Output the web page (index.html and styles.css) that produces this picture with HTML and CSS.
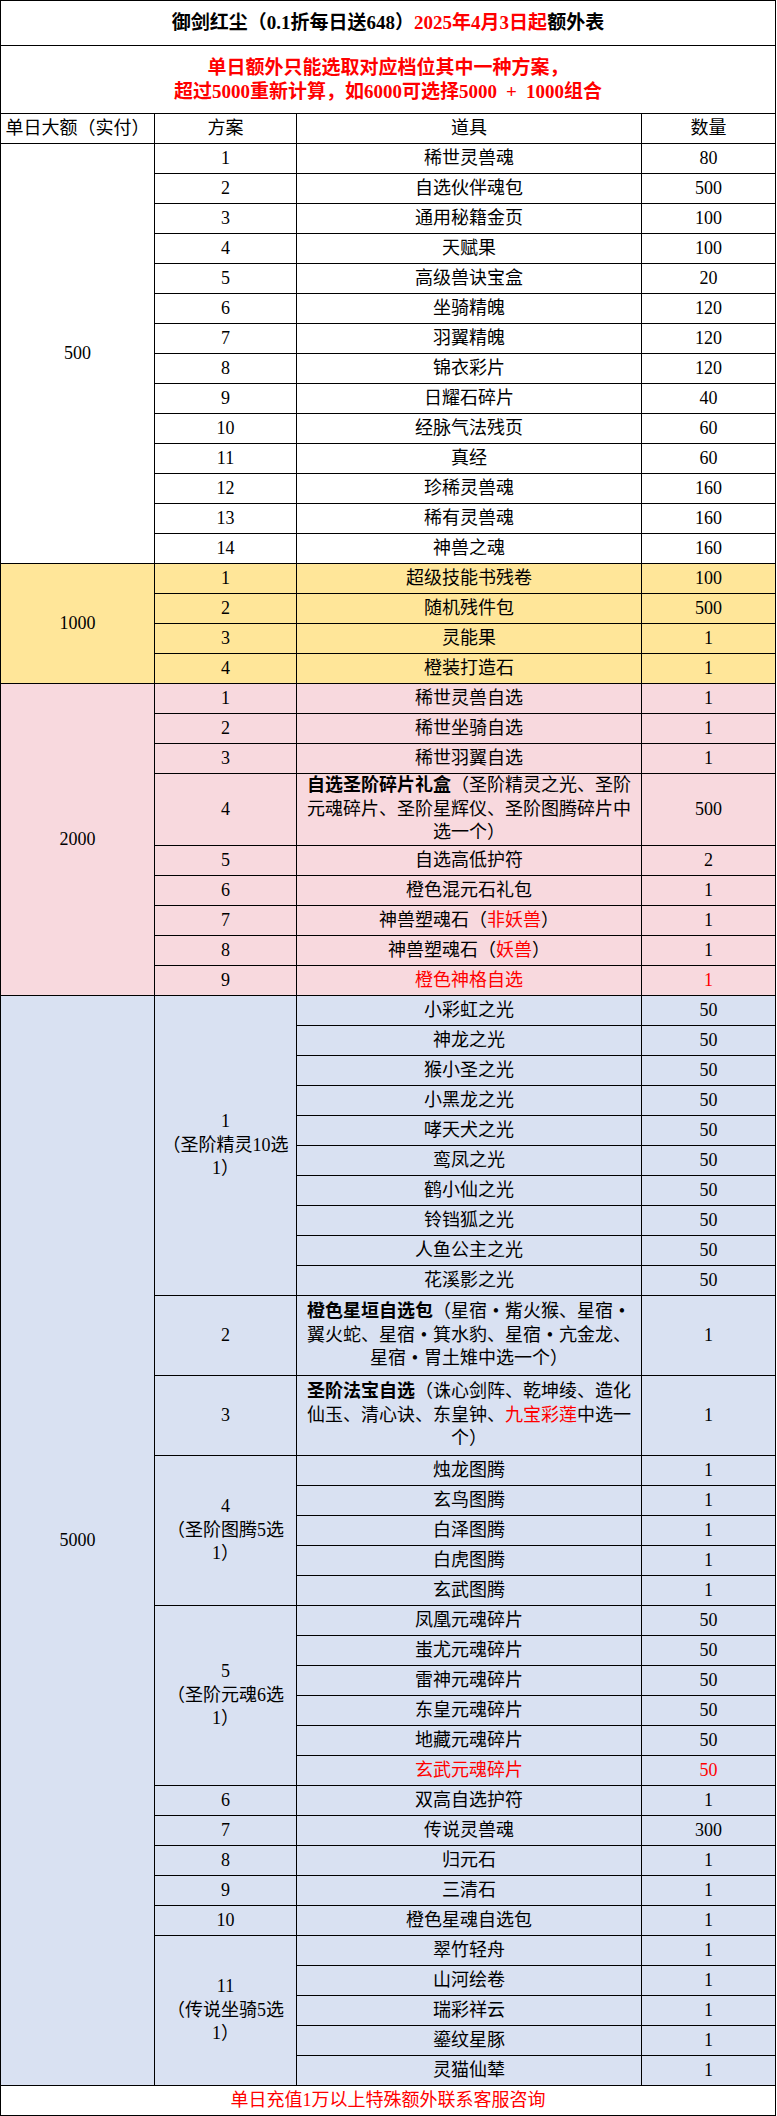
FILE: index.html
```html
<!DOCTYPE html>
<html lang="zh-CN">
<head>
<meta charset="utf-8">
<title>御剑红尘 额外表</title>
<link rel="stylesheet" href="styles.css">
</head>
<body>
<div class="sheet">
  <div class="c wide title"><div>御剑红尘（0.1折每日送648）<span class="red">2025年4月3日起</span>额外表</div></div>
  <div class="c wide notice"><div>单日额外只能选取对应档位其中一种方案，<br>超过5000重新计算，如6000可选择5000<span class="op">+</span>1000组合</div></div>

  <div class="c">单日大额（实付）</div>
  <div class="c">方案</div>
  <div class="c">道具</div>
  <div class="c">数量</div>

  <div class="block">
    <div class="c r14">500</div>
    <div class="c">1</div><div class="c">稀世灵兽魂</div><div class="c">80</div>
    <div class="c">2</div><div class="c">自选伙伴魂包</div><div class="c">500</div>
    <div class="c">3</div><div class="c">通用秘籍金页</div><div class="c">100</div>
    <div class="c">4</div><div class="c">天赋果</div><div class="c">100</div>
    <div class="c">5</div><div class="c">高级兽诀宝盒</div><div class="c">20</div>
    <div class="c">6</div><div class="c">坐骑精魄</div><div class="c">120</div>
    <div class="c">7</div><div class="c">羽翼精魄</div><div class="c">120</div>
    <div class="c">8</div><div class="c">锦衣彩片</div><div class="c">120</div>
    <div class="c">9</div><div class="c">日耀石碎片</div><div class="c">40</div>
    <div class="c">10</div><div class="c">经脉气法残页</div><div class="c">60</div>
    <div class="c">11</div><div class="c">真经</div><div class="c">60</div>
    <div class="c">12</div><div class="c">珍稀灵兽魂</div><div class="c">160</div>
    <div class="c">13</div><div class="c">稀有灵兽魂</div><div class="c">160</div>
    <div class="c">14</div><div class="c">神兽之魂</div><div class="c">160</div>
  </div>

  <div class="block gold">
    <div class="c r4">1000</div>
    <div class="c">1</div><div class="c">超级技能书残卷</div><div class="c">100</div>
    <div class="c">2</div><div class="c">随机残件包</div><div class="c">500</div>
    <div class="c">3</div><div class="c">灵能果</div><div class="c">1</div>
    <div class="c">4</div><div class="c">橙装打造石</div><div class="c">1</div>
  </div>

  <div class="block rose">
    <div class="c r9">2000</div>
    <div class="c">1</div><div class="c">稀世灵兽自选</div><div class="c">1</div>
    <div class="c">2</div><div class="c">稀世坐骑自选</div><div class="c">1</div>
    <div class="c">3</div><div class="c">稀世羽翼自选</div><div class="c">1</div>
    <div class="c">4</div><div class="c long h71"><div><b>自选圣阶碎片礼盒</b>（圣阶精灵之光、圣阶元魂碎片、圣阶星辉仪、圣阶图腾碎片中选一个）</div></div><div class="c">500</div>
    <div class="c">5</div><div class="c">自选高低护符</div><div class="c">2</div>
    <div class="c">6</div><div class="c">橙色混元石礼包</div><div class="c">1</div>
    <div class="c">7</div><div class="c"><div>神兽塑魂石（<span class="red">非妖兽</span>）</div></div><div class="c">1</div>
    <div class="c">8</div><div class="c"><div>神兽塑魂石（<span class="red">妖兽</span>）</div></div><div class="c">1</div>
    <div class="c">9</div><div class="c red">橙色神格自选</div><div class="c red">1</div>
  </div>

  <div class="block sky">
    <div class="c r33">5000</div>
    <div class="c r10"><div>1<br>（圣阶精灵10选1）</div></div>
    <div class="c">小彩虹之光</div><div class="c">50</div>
    <div class="c">神龙之光</div><div class="c">50</div>
    <div class="c">猴小圣之光</div><div class="c">50</div>
    <div class="c">小黑龙之光</div><div class="c">50</div>
    <div class="c">哮天犬之光</div><div class="c">50</div>
    <div class="c">鸾凤之光</div><div class="c">50</div>
    <div class="c">鹤小仙之光</div><div class="c">50</div>
    <div class="c">铃铛狐之光</div><div class="c">50</div>
    <div class="c">人鱼公主之光</div><div class="c">50</div>
    <div class="c">花溪影之光</div><div class="c">50</div>

    <div class="c">2</div><div class="c long h79"><div><b>橙色星垣自选包</b>（星宿<span class="dot">•</span>觜火猴、星宿<span class="dot">•</span>翼火蛇、星宿<span class="dot">•</span>箕水豹、星宿<span class="dot">•</span>亢金龙、星宿<span class="dot">•</span>胃土雉中选一个）</div></div><div class="c">1</div>
    <div class="c">3</div><div class="c long h79"><div><b>圣阶法宝自选</b>（诛心剑阵、乾坤绫、造化仙玉、清心诀、东皇钟、<span class="red">九宝彩莲</span>中选一个）</div></div><div class="c">1</div>

    <div class="c r5"><div>4<br>（圣阶图腾5选1）</div></div>
    <div class="c">烛龙图腾</div><div class="c">1</div>
    <div class="c">玄鸟图腾</div><div class="c">1</div>
    <div class="c">白泽图腾</div><div class="c">1</div>
    <div class="c">白虎图腾</div><div class="c">1</div>
    <div class="c">玄武图腾</div><div class="c">1</div>

    <div class="c r6"><div>5<br>（圣阶元魂6选1）</div></div>
    <div class="c">凤凰元魂碎片</div><div class="c">50</div>
    <div class="c">蚩尤元魂碎片</div><div class="c">50</div>
    <div class="c">雷神元魂碎片</div><div class="c">50</div>
    <div class="c">东皇元魂碎片</div><div class="c">50</div>
    <div class="c">地藏元魂碎片</div><div class="c">50</div>
    <div class="c red">玄武元魂碎片</div><div class="c red">50</div>

    <div class="c">6</div><div class="c">双高自选护符</div><div class="c">1</div>
    <div class="c">7</div><div class="c">传说灵兽魂</div><div class="c">300</div>
    <div class="c">8</div><div class="c">归元石</div><div class="c">1</div>
    <div class="c">9</div><div class="c">三清石</div><div class="c">1</div>
    <div class="c">10</div><div class="c">橙色星魂自选包</div><div class="c">1</div>

    <div class="c r5"><div>11<br>（传说坐骑5选1）</div></div>
    <div class="c">翠竹轻舟</div><div class="c">1</div>
    <div class="c">山河绘卷</div><div class="c">1</div>
    <div class="c">瑞彩祥云</div><div class="c">1</div>
    <div class="c">鎏纹星豚</div><div class="c">1</div>
    <div class="c">灵猫仙辇</div><div class="c">1</div>
  </div>

  <div class="c wide red">单日充值1万以上特殊额外联系客服咨询</div>
</div>
</body>
</html>
```

FILE: styles.css
```css
html, body {
  margin: 0;
  background: #fff;
}

body {
  font-family: "Liberation Serif", "Noto Sans CJK SC", serif;
  font-size: 18px;
  line-height: 23.5px;
  color: #000;
  text-spacing-trim: space-all;
}

.sheet {
  display: grid;
  grid-template-columns: 153px 141px 344px 133px;
  grid-auto-rows: minmax(29px, auto);
  gap: 1px;
  padding: 1px;
  background: #000;
  width: max-content;
}

.block {
  display: contents;
}

.block.gold { --bg: #ffe699; }
.block.rose { --bg: #f8d9de; }
.block.sky  { --bg: #d9e1f2; }

.c {
  background: var(--bg, #fff);
  display: flex;
  align-items: center;
  justify-content: center;
  text-align: center;
}

.wide { grid-column: 1 / -1; }

.title {
  min-height: 44px;
  font-size: 19px;
  font-weight: 700;
}

.notice {
  min-height: 67px;
  font-size: 19px;
  font-weight: 700;
  color: #f00;
}

.op {
  margin: 0 9px;
}

.red { color: #f00; }

.r4  { grid-row: span 4; }
.r5  { grid-row: span 5; }
.r6  { grid-row: span 6; }
.r9  { grid-row: span 9; }
.r10 { grid-row: span 10; }
.r14 { grid-row: span 14; }
.r33 { grid-row: span 33; }

.long {
  padding: 0 8px;
}

.long b { font-weight: 700; }

.h71 { min-height: 71px; }
.h79 { min-height: 79px; }

.dot {
  display: inline-block;
  width: 1em;
  text-align: center;
}
```
